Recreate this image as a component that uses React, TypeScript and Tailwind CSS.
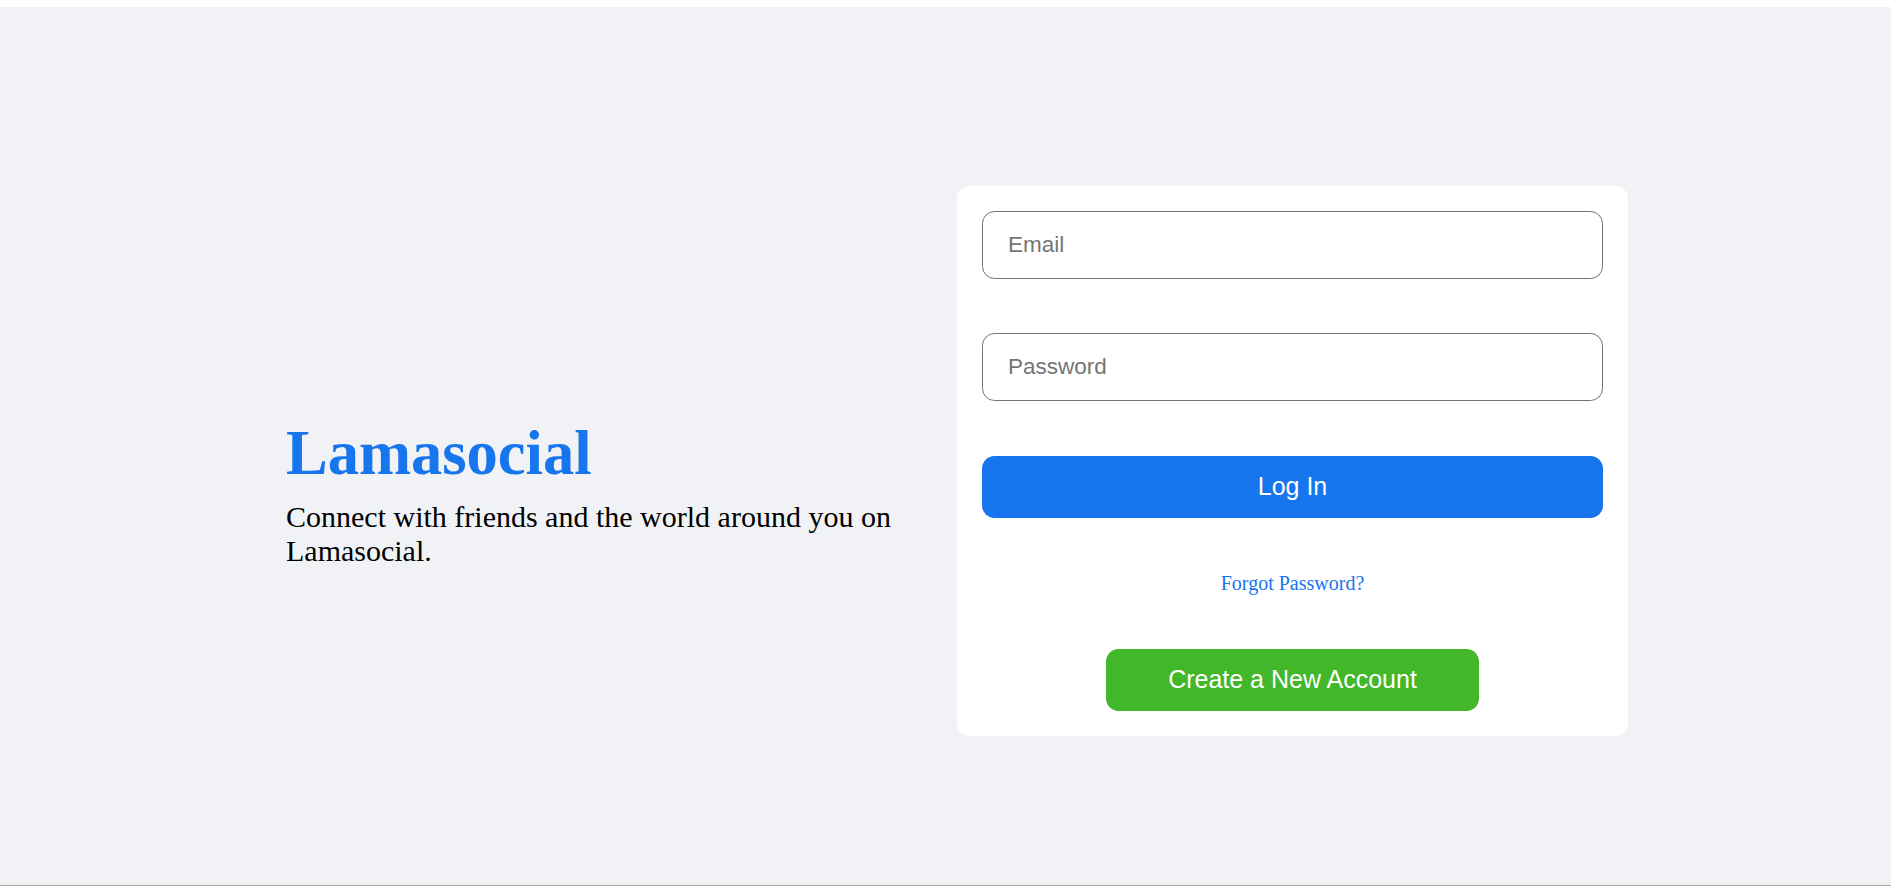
const Login = () => {
  return (
    <div className="bg-white h-[886px] pt-[7px] overflow-hidden">
      <div className="bg-[#f0f2f5] h-[879px] border-b border-[#a9a9a9] font-['Liberation_Serif',serif]">
        {/* WRAPPER */}
        <div className="flex w-[1342px] ml-[286px] pt-[179px]">
          {/* LEFT */}
          <div className="flex-1 flex flex-col pt-[232px]">
            <h3 className="text-[62.5px] font-bold text-[#1775ee] leading-[1.15] mb-[10px]">
              Lamasocial
            </h3>
            <span className="text-[30px] leading-[1.15] text-black">
              Connect with friends and the world around you on Lamasocial.
            </span>
          </div>
          {/* RIGHT */}
          <div className="flex-1 flex flex-col">
            <div className="h-[550px] p-[25px] bg-white rounded-[12.5px] flex flex-col justify-between">
              <input
                placeholder="Email"
                className="h-[68px] rounded-[12.5px] border border-[#737373] text-[22.5px] pl-[25px] font-['Liberation_Sans',Arial,sans-serif] placeholder:text-[#757575] outline-none"
              />
              <input
                placeholder="Password"
                className="h-[68px] rounded-[12.5px] border border-[#737373] text-[22.5px] pl-[25px] font-['Liberation_Sans',Arial,sans-serif] placeholder:text-[#757575] outline-none"
              />
              <button className="h-[62px] rounded-[12.5px] bg-[#1775ee] text-white text-[25px] font-['Liberation_Sans',Arial,sans-serif]">
                Log In
              </button>
              <span className="text-center text-[#1775ee] text-[20px] leading-[1.15]">
                Forgot Password?
              </span>
              <button className="w-[60%] self-center h-[62px] rounded-[12.5px] bg-[#42b72a] text-white text-[25px] font-['Liberation_Sans',Arial,sans-serif]">
                Create a New Account
              </button>
            </div>
          </div>
        </div>
      </div>
    </div>
  );
};

export default Login;
